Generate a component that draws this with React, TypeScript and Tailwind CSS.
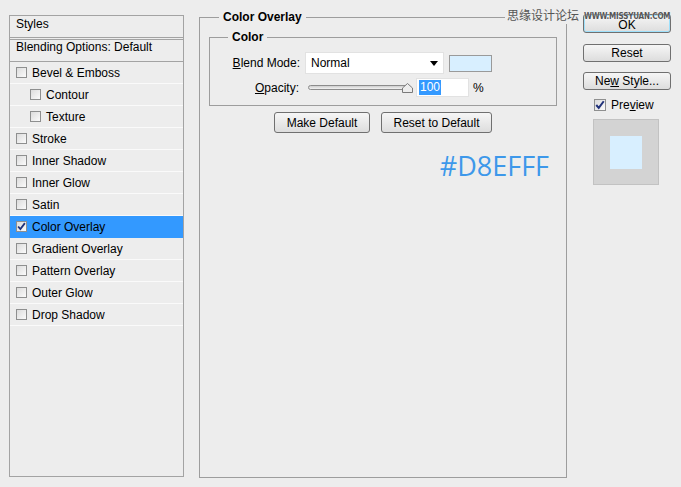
import React from "react";

const font = { fontFamily: '"Liberation Sans", Arial, sans-serif' };

function Box({ checked = false, size = 10 }: { checked?: boolean; size?: number }) {
  return (
    <span
      className="inline-flex items-center justify-center border border-[#8e8f8f] bg-gradient-to-br from-[#dcdcdc] to-[#fbfbfb] shrink-0"
      style={{ width: size, height: size }}
    >
      {checked && (
        <svg width={size - 2} height={size - 2} viewBox="0 0 8 8">
          <path d="M1 4 L3 6.3 L7 1" fill="none" stroke="#21327a" strokeWidth="1.6" />
        </svg>
      )}
    </span>
  );
}

const rows: { label: string; indent?: boolean; active?: boolean }[] = [
  { label: "Bevel & Emboss" },
  { label: "Contour", indent: true },
  { label: "Texture", indent: true },
  { label: "Stroke" },
  { label: "Inner Shadow" },
  { label: "Inner Glow" },
  { label: "Satin" },
  { label: "Color Overlay", active: true },
  { label: "Gradient Overlay" },
  { label: "Pattern Overlay" },
  { label: "Outer Glow" },
  { label: "Drop Shadow" },
];

function Btn({ children, className = "" }: { children: React.ReactNode; className?: string }) {
  return (
    <div
      className={`flex items-center justify-center rounded-[3px] border border-[#707070] bg-gradient-to-b from-[#f6f6f6] to-[#dddddd] text-[12px] text-black ${className}`}
    >
      {children}
    </div>
  );
}

export default function App() {
  return (
    <div className="relative w-[681px] h-[487px] overflow-hidden bg-[#ededed] text-[12px] text-black" style={font}>
      <div className="flex items-start">
        {/* styles list */}
        <div className="ml-[9px] mt-[15px] w-[175px] h-[462px] border border-[#a3a3a3]">
          <div className="h-[24px] border-b-[3px] border-double border-[#a3a3a3] pl-[6px] pt-[1px] leading-[14px]">Styles</div>
          <div className="h-[22px] border-b border-[#a3a3a3] pl-[6px] leading-[14px]">Blending Options: Default</div>
          {rows.map((r) => (
            <div
              key={r.label}
              className={`h-[22px] border-b flex items-center gap-[5px] ${
                r.active ? "bg-[#3399ff] border-[#3399ff]" : "border-[#fafafa]"
              } ${r.indent ? "pl-[20px]" : "pl-[6px]"}`}
            >
              <Box checked={r.active} size={11} />
              <span>{r.label}</span>
            </div>
          ))}
        </div>

        {/* main settings */}
        <fieldset className="ml-[15px] mt-[9px] w-[368px] h-[469px] border border-[#9d9d9d] px-[9px]">
          <legend className="ml-[10px] px-[4px] font-bold leading-[16px]">Color Overlay</legend>
          <fieldset className="mt-[4px] h-[77px] border border-[#9d9d9d]">
            <legend className="ml-[18px] px-[4px] font-bold leading-[16px]">Color</legend>
            <div className="mt-[7px] flex items-center">
              <span className="w-[90px] text-right">
                <u>B</u>lend Mode:
              </span>
              <div className="ml-[5px] w-[139px] h-[22px] bg-white border border-[#e2e2e2] flex items-center justify-between pl-[5px] pr-[5px]">
                <span>Normal</span>
                <svg width="8" height="5" viewBox="0 0 8 5">
                  <path d="M0 0 H8 L4 5 Z" fill="#000" />
                </svg>
              </div>
              <div className="ml-[5px] w-[43px] h-[17px] bg-[#d8efff] border border-[#9a9a9a]" />
            </div>
            <div className="mt-[4px] flex items-center">
              <span className="w-[89px] text-right">
                <u>O</u>pacity:
              </span>
              <div className="relative ml-[9px] w-[104px] h-[19px] flex items-center">
                <div className="w-[102px] h-[5px] rounded-full border border-[#8c8c8c] bg-gradient-to-b from-[#cfcfcf] to-[#f2f2f2]" />
                <svg className="absolute left-[94px] top-[5px]" width="11" height="10" viewBox="0 0 11 10">
                  <path d="M0.5 9.5 V5 L5.5 0.5 L10.5 5 V9.5 Z" fill="#ededed" stroke="#7a7a7a" />
                </svg>
              </div>
              <div className="ml-[4px] w-[53px] h-[19px] bg-white border border-[#e2e2e2] flex items-center pl-[2px]">
                <span className="bg-[#3399ff] text-white px-[1px] leading-[15px]">100</span>
              </div>
              <span className="ml-[4px]">%</span>
            </div>
          </fieldset>
          <div className="mt-[6px] flex justify-center gap-[11px]">
            <Btn className="w-[96px] h-[21px]">Make Default</Btn>
            <Btn className="w-[111px] h-[21px]">Reset to Default</Btn>
          </div>
          <div className="mt-[16px] flex justify-end pr-[8px]">
            <span className="text-[27px] leading-[34px] text-[#3d98ea]" style={{ fontFamily: '"Open Sans", sans-serif' }}>
              #D8EFFF
            </span>
          </div>
        </fieldset>

        {/* right column */}
        <div className="ml-[16px] mt-[14px] w-[88px] flex flex-col">
          <Btn className="h-[19px] border-[#3c7fb1] shadow-[inset_0_0_0_1px_#9ee0fb] leading-[12px] pt-[3px]">OK</Btn>
          <Btn className="mt-[11px] h-[18px]">Reset</Btn>
          <Btn className="mt-[10px] h-[18px]">
            Ne<u>w</u>&nbsp;Style...
          </Btn>
          <div className="mt-[6px] ml-[11px] flex items-center gap-[5px]">
            <Box checked size={12} />
            <span>
              Pre<u>v</u>iew
            </span>
          </div>
          <div className="mt-[5px] ml-[10px] w-[66px] h-[66px] bg-[#d3d3d3] border border-[#c2c2c2] flex items-center justify-center">
            <div className="w-[32px] h-[33px] bg-[#d8efff]" />
          </div>
        </div>
      </div>

      {/* watermark */}
      <div className="absolute left-[505px] top-[6px] flex items-start">
        <span
          className="bg-[#ededed] px-[2px] text-[12px] text-[#555]"
          style={{ fontFamily: '"Noto Sans CJK SC", sans-serif' }}
        >
          思缘设计论坛
        </span>
        <span
          className="ml-[3px] mt-[5px] text-[8px] font-bold tracking-[-0.2px] text-[#555] [text-shadow:0_0_1px_#fff]"
          style={{ fontFamily: '"DejaVu Sans Condensed", "DejaVu Sans", sans-serif' }}
        >
          WWW.MISSYUAN.COM
        </span>
      </div>
    </div>
  );
}
